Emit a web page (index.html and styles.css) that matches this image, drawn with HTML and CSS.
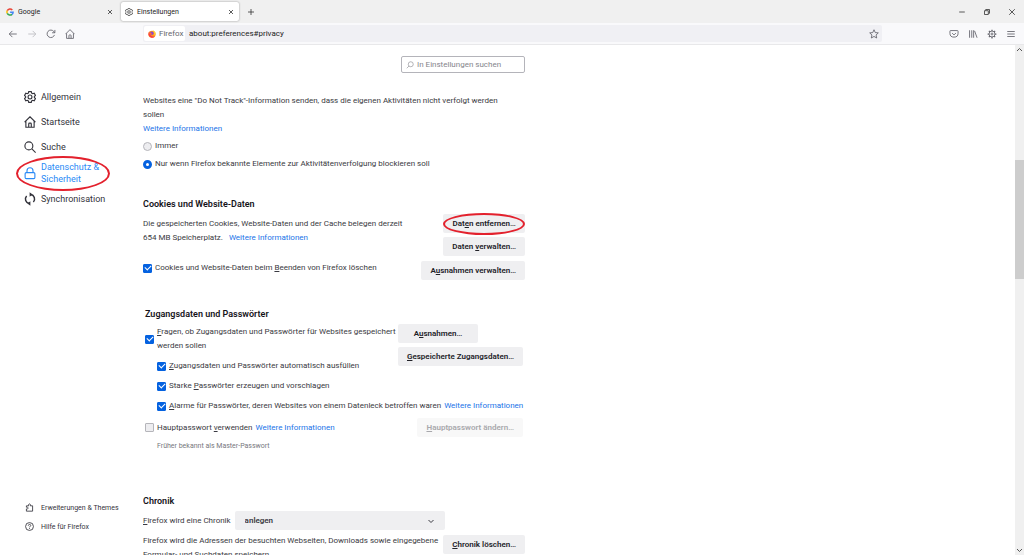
FILE: index.html
```html
<!DOCTYPE html>
<html lang="de">
<head>
<meta charset="utf-8">
<title>Einstellungen</title>
<link rel="stylesheet" href="styles.css">
</head>
<body>
<header class="tabbar">
  <div class="tab">
    <svg class="tab-icon" viewBox="0 0 16 16"><g fill="none" stroke-width="3"><path d="M12.6 3.9A6.2 6.2 0 0 0 2.5 5.3" stroke="#ea4335"/><path d="M2.5 5.3a6.2 6.2 0 0 0 0 5.4" stroke="#fbbc05"/><path d="M2.5 10.7a6.2 6.2 0 0 0 9.6 2" stroke="#34a853"/><path d="M12.1 12.7a6 6 0 0 0 2.1-4.4H8.2" stroke="#4285f4"/></g></svg>
    <span class="tab-title">Google</span>
    <button class="icon-button" aria-label="Google schließen"><svg class="close-icon" viewBox="0 0 8 8"><path d="M2 2l4 4m0-4l-4 4"/></svg></button>
  </div>
  <div class="tab tab-active">
    <svg class="tab-icon line-icon" viewBox="0 0 16 16"><use href="#gear"/></svg>
    <span class="tab-title">Einstellungen</span>
    <button class="icon-button" aria-label="Einstellungen schließen"><svg class="close-icon" viewBox="0 0 8 8"><path d="M2 2l4 4m0-4l-4 4"/></svg></button>
  </div>
  <button class="icon-button new-tab" aria-label="Neuer Tab"><svg class="close-icon" viewBox="0 0 8 8"><path d="M4 1v6M1 4h6"/></svg></button>
  <div class="window-controls">
    <button class="icon-button" aria-label="Minimieren"><svg class="close-icon" viewBox="0 0 8 8"><path d="M1.200 4h5.600"/></svg></button>
    <button class="icon-button" aria-label="Wiederherstellen"><svg class="close-icon" viewBox="0 0 8 8"><path d="M1.500 2.700h3.800v3.800H1.500zM2.700 2.500V1.500h3.800v3.800h-1"/></svg></button>
    <button class="icon-button" aria-label="Fenster schließen"><svg class="close-icon" viewBox="0 0 8 8"><path d="M1.200 1.200l5.600 5.600m0-5.600L1.200 6.800"/></svg></button>
  </div>
</header>
<div class="toolbar">
  <div class="nav-buttons">
    <button class="icon-button" aria-label="Zurück"><svg class="tool-icon" viewBox="0 0 16 16"><path d="M14 8H2M7 3L2 8l5 5"/></svg></button>
    <button class="icon-button faded" aria-label="Vor"><svg class="tool-icon" viewBox="0 0 16 16"><path d="M2 8h12M9 3l5 5-5 5"/></svg></button>
    <button class="icon-button" aria-label="Neu laden"><svg class="tool-icon" viewBox="0 0 16 16"><path d="M13.500 9.500A6 6 0 1 1 12.500 4l1.500 2M14.200 1.500V6H9.700"/></svg></button>
    <button class="icon-button" aria-label="Startseite"><svg class="tool-icon" viewBox="0 0 16 16"><use href="#house"/></svg></button>
  </div>
  <div class="urlbar">
    <span class="identity">
      <svg class="tab-icon" viewBox="0 0 16 16"><circle cx="8" cy="8.500" r="7.200" fill="#ff9a1a"/><path d="M.8 8.500a7.200 7.200 0 0 0 13 4C10 14 5 12 3.500 8 2.500 6 2.500 4 3 2.500 1.500 4 .8 6 .8 8.500z" fill="#fa3a4c"/><path d="M9.500 0C10 3 14 5 12.500 11 16 9 16 5.500 13.500 3 12.500 2 11 1.500 9.500 0z" fill="#ffd43a"/><circle cx="7.500" cy="6.500" r="3.600" fill="#8a45d0"/><path d="M3 6.500c2-1.500 4-1 5 .5-1.800 0-2 1.500-.5 2.500-2 1.500-4.500 0-4.500-3z" fill="#ff6a2a"/></svg>
      Firefox
    </span>
    <input class="url-input" type="text" aria-label="Adresse" value="about:preferences#privacy">
    <button class="icon-button" aria-label="Lesezeichen"><svg class="tool-icon" viewBox="0 0 16 16"><path d="M8 1.200l2 4.500 4.900.5-3.600 3.300 1 4.900L8 11.900l-4.300 2.500 1-4.900L1.100 6.200 6 5.700z"/></svg></button>
  </div>
  <div class="tool-buttons">
    <button class="icon-button" aria-label="Pocket"><svg class="tool-icon" viewBox="0 0 16 16"><path d="M2.500 2.500h11q1 0 1 1V7a6.500 6 0 0 1-13 0V3.500q0-1 1-1zM5 6.500l3 3 3-3"/></svg></button>
    <button class="icon-button" aria-label="Bibliothek"><svg class="tool-icon" viewBox="0 0 16 16"><path d="M2.500 2v12M6 2v12M9 2v12M10.500 3l4 11"/></svg></button>
    <button class="icon-button" aria-label="Einstellungen"><svg class="tool-icon" viewBox="0 0 16 16"><circle cx="8" cy="8" r="4.800"/><circle cx="8" cy="8" r="1.600"/><path d="M8 1v2.500M8 12.500V15M1 8h2.500M12.500 8H15M3 3l2 2M11 11l2 2M3 13l2-2M11 5l2-2" stroke-width="2"/></svg></button>
    <button class="icon-button" aria-label="Menü"><svg class="tool-icon" viewBox="0 0 16 16"><path d="M2 4h12M2 8h12M2 12h12"/></svg></button>
  </div>
</div>
<div class="page">
  <aside class="sidebar">
    <nav class="categories">
      <a class="category" href="#general"><svg class="category-icon" viewBox="0 0 16 16"><use href="#gear"/></svg>Allgemein</a>
      <a class="category" href="#home"><svg class="category-icon" viewBox="0 0 16 16"><use href="#house"/></svg>Startseite</a>
      <a class="category" href="#search"><svg class="category-icon" viewBox="0 0 16 16"><circle cx="6.500" cy="6.500" r="5.300"/><path d="M10.500 10.500l5 5"/></svg>Suche</a>
      <a class="category category-selected" href="#privacy"><svg class="category-icon" viewBox="0 0 16 16"><rect x="1.500" y="7.500" width="13" height="8" rx="1.500"/><path d="M4 7.500V5a4 4 0 0 1 8 0v2.500"/></svg><span>Datenschutz &amp; Sicherheit</span></a>
      <a class="category" href="#sync"><svg class="category-icon" viewBox="0 0 16 16"><path d="M7 14A6 6 0 0 1 3.500 4M9 2a6 6 0 0 1 3.500 10" stroke-width="2"/><path d="M7.500-1v6L11.500 2zM8.500 11v6L4.500 14z" fill="currentColor" stroke="none"/></svg>Synchronisation</a>
    </nav>
    <nav class="footer-links">
      <a class="footer-link" href="#addons"><svg class="footer-icon" viewBox="0 0 16 16"><path d="M2.500 14.500v-4c4 1 4-4 0-3V5h4c-1.500-4.500 4.500-4.500 3 0h4v9.500z"/></svg>Erweiterungen &amp; Themes</a>
      <a class="footer-link" href="#help"><svg class="footer-icon" viewBox="0 0 16 16"><circle cx="8" cy="8" r="7"/><path d="M5.800 6.500c0-3 4.400-3 4.400-.3 0 1.500-2.200 1.500-2.200 3.300M8 11v1.500"/></svg>Hilfe für Firefox</a>
    </nav>
  </aside>
  <main class="content">
    <label class="search"><svg class="search-icon" viewBox="0 0 16 16"><circle cx="9.500" cy="6.500" r="5"/><path d="M6 10l-4.500 4.500"/></svg><input class="search-input" type="search" placeholder="In Einstellungen suchen" aria-label="In Einstellungen suchen"></label>

    <section class="tracking">
      <p class="text">Websites eine "Do Not Track"-Information senden, dass die eigenen Aktivitäten nicht verfolgt werden sollen</p>
      <a class="link" href="#dnt">Weitere Informationen</a>
      <div class="radios">
        <label class="option"><input class="radio" type="radio" name="dnt">Immer</label>
        <label class="option"><input class="radio" type="radio" name="dnt" checked>Nur wenn Firefox bekannte Elemente zur Aktivitätenverfolgung blockieren soll</label>
      </div>
    </section>

    <section class="cookies">
      <h2 class="heading">Cookies und Website-Daten</h2>
      <div class="row">
        <p class="text storage">Die gespeicherten Cookies, Website-Daten und der Cache belegen derzeit 654 MB Speicherplatz. <a class="link spaced" href="#storage">Weitere Informationen</a></p>
        <div class="buttons">
          <button class="button marked">Dat<u>e</u>n entfernen…</button>
          <button class="button">Daten <u>v</u>erwalten…</button>
        </div>
      </div>
      <div class="row row-next">
        <label class="option"><input class="check" type="checkbox" checked><span>Cookies und Website-Daten beim <u>B</u>eenden von Firefox löschen</span></label>
        <button class="button">A<u>u</u>snahmen verwalten…</button>
      </div>
    </section>

    <section class="logins">
      <h2 class="heading">Zugangsdaten und Passwörter</h2>
      <div class="login-grid">
        <label class="option ask"><input class="check" type="checkbox" checked><span><u>F</u>ragen, ob Zugangsdaten und Passwörter für Websites gespeichert werden sollen</span></label>
        <div class="login-buttons">
          <button class="button exceptions">A<u>u</u>snahmen…</button>
          <button class="button stored"><u>G</u>espeicherte Zugangsdaten…</button>
        </div>
        <label class="option sub"><input class="check" type="checkbox" checked><span><u>Z</u>ugangsdaten und Passwörter automatisch ausfüllen</span></label>
        <label class="option sub"><input class="check" type="checkbox" checked><span>Starke <u>P</u>asswörter erzeugen und vorschlagen</span></label>
        <div class="option sub wide"><label class="option"><input class="check" type="checkbox" checked><span><u>A</u>larme für Passwörter, deren Websites von einem Datenleck betroffen waren</span></label><a class="link" href="#breach">Weitere Informationen</a></div>
      </div>
      <div class="row master">
        <div class="option"><label class="option"><input class="check" type="checkbox"><span>Hauptpasswort <u>v</u>erwenden</span></label><a class="link" href="#primary">Weitere Informationen</a></div>
        <button class="button" disabled><u>H</u>auptpasswort ändern…</button>
      </div>
      <p class="hint">Früher bekannt als Master-Passwort</p>
    </section>

    <section class="history">
      <h2 class="heading">Chronik</h2>
      <div class="mode">
        <label for="history-mode"><u>F</u>irefox wird eine Chronik</label>
        <div class="select-box">
          <select class="select" id="history-mode"><option>anlegen</option></select>
          <svg class="chevron" viewBox="0 0 8 8"><path d="M1.500 3l2.500 2.500L6.500 3"/></svg>
        </div>
      </div>
      <div class="row clear">
        <p class="text">Firefox wird die Adressen der besuchten Webseiten, Downloads sowie eingegebene Formular- und Suchdaten speichern.</p>
        <button class="button"><u>C</u>hronik löschen…</button>
      </div>
    </section>
  </main>
  <div class="scrollbar">
    <svg class="scroll-arrow" viewBox="0 0 9 9"><path d="M2 6l2.500-2.500L7 6"/></svg>
    <div class="track-before"></div>
    <div class="thumb"></div>
    <div class="track-after"></div>
    <svg class="scroll-arrow" viewBox="0 0 9 9"><path d="M2 3l2.500 2.500L7 3"/></svg>
  </div>
</div>
<svg class="symbols" aria-hidden="true">
  <symbol id="gear" viewBox="0 0 16 16"><circle cx="8" cy="8" r="2.600"/><path d="M6.300.8h3.400l.5 2 1.400.8 2-.6 1.700 2.900L13.800 7.300v1.400l1.500 1.400-1.700 2.900-2-.6-1.400.8-.5 2H6.300l-.5-2-1.400-.8-2 .6-1.700-2.900 1.500-1.400V7.300L.7 5.900 2.400 3l2 .6 1.400-.8z"/></symbol>
  <symbol id="house" viewBox="0 0 16 16"><path d="M.8 8.200L8 1l7.200 7.200M2.500 7v8h11V7M6.300 15v-4.500q0-1 1-1h1.400q1 0 1 1V15"/></symbol>
</svg>
</body>
</html>
```
FILE: styles.css
```css
*, ::before, ::after { box-sizing: border-box; }
body {
  margin: 0;
  height: 100vh;
  display: flex;
  flex-direction: column;
  overflow: hidden;
  background: #fff;
  color: #3a3a42;
  font: 8px/14px Roboto, "Noto Sans", sans-serif;
}
p, h2 { margin: 0; }
button, input, select { font: inherit; color: inherit; }
svg { fill: none; stroke: currentColor; flex: none; }
u { text-decoration-thickness: 1px; text-underline-offset: 1px; }
.symbols { position: absolute; width: 0; height: 0; }
.icon-button { display: flex; padding: 0; border: 0; background: none; }

.tabbar {
  flex: none;
  display: flex;
  align-items: center;
  height: 23px;
  background: #f0f0f0;
  font-size: 7px;
  color: #222;
}
.tab { display: flex; align-items: center; gap: 4px; width: 120px; height: 19px; padding: 0 6px; }
.tab-active { width: 118px; margin-left: 1px; padding: 0 4px; background: #fff; border-radius: 2px; box-shadow: 0 0 2px #888; }
.tab-title { flex: 1; }
.tab-icon { width: 8px; height: 8px; stroke: none; }
.line-icon { stroke: #333; stroke-width: 1.500; }
.close-icon { width: 8px; height: 8px; stroke: #333; stroke-width: 0.800; }
.new-tab { margin-left: 8px; }
.window-controls { display: flex; gap: 17px; margin-left: auto; padding-right: 8px; }

.toolbar {
  flex: none;
  display: flex;
  align-items: center;
  height: 22px;
  background: #f9f9fb;
  border-bottom: 1px solid #e8e8ea;
}
.nav-buttons { display: flex; gap: 9px; width: 143px; padding-left: 8px; }
.tool-icon { width: 10px; height: 10px; stroke: #66666e; stroke-width: 1.400; }
.faded { opacity: 0.400; }
.urlbar {
  flex: 1;
  display: flex;
  align-items: center;
  height: 17px;
  padding: 1px 3px 1px 1px;
  background: #f0f0f4;
  border-radius: 2px;
}
.identity { display: flex; align-items: center; gap: 3px; width: 41px; height: 15px; padding: 0 4px; background: #fff; border-radius: 2px; color: #66666e; }
.url-input { flex: 1; height: 15px; padding: 0 4px; border: 0; background: none; color: #222; }
.tool-buttons { display: flex; gap: 9px; margin-left: 67px; padding-right: 8px; }

.page { flex: 1; display: flex; min-height: 0; }
.sidebar { flex: none; display: flex; flex-direction: column; width: 143px; padding: 39px 0 19px; }
.categories, .footer-links { display: flex; flex-direction: column; }
.categories { font-size: 9px; }
.category { position: relative; display: flex; align-items: center; gap: 5px; height: 25px; padding: 0 32px 0 24px; color: #33333b; text-decoration: none; line-height: 12px; }
.category-selected { height: 27px; color: #2a8af6; }
.category-icon { width: 12px; height: 12px; stroke-width: 1.500; overflow: visible; }
.category-selected::after, .marked::after {
  content: "";
  position: absolute;
  border: 2px solid #e3212d;
  border-radius: 50%;
}
.category-selected::after { left: 16px; top: -3px; width: 94px; height: 35px; }
.footer-links { margin-top: auto; font-size: 7px; }
.footer-link { display: flex; align-items: center; gap: 7px; height: 19px; padding-left: 25px; color: #33333b; text-decoration: none; }
.footer-icon { width: 9px; height: 9px; stroke-width: 1.500; }

.content { flex: none; width: 382px; padding-top: 11px; overflow: hidden; }
.search { display: flex; align-items: center; gap: 3px; width: 124px; height: 17px; margin-left: auto; padding: 0 4px; border: 1px solid #b4b4ba; border-radius: 2px; color: #85858c; }
.search-icon { width: 8px; height: 8px; stroke-width: 1.200; }
.search-input { flex: 1; min-width: 0; padding: 0; border: 0; outline: 0; background: none; appearance: none; }
.search-input::placeholder { color: #85858c; }
.link { color: #1a73e8; text-decoration: none; }
.text { flex: 1; }
.tracking { margin-top: 21px; }
.tracking .text { padding-right: 16px; }
.tracking .link { display: block; }
.radios { display: flex; flex-direction: column; gap: 4px; margin-top: 3px; }
.option { display: flex; align-items: center; gap: 3px; }
.radio, .check { flex: none; appearance: none; width: 9px; height: 9px; margin: 0; border: 1px solid #b5b5ba; background: #ededf0; }
.radio { border-radius: 50%; }
.radio:checked { border: 3px solid #0562e0; background: #fff; }
.check { display: grid; place-items: center; border-radius: 1px; }
.check:checked { border-color: #0562e0; background: #0562e0; }
.check:checked::before { content: ""; width: 6px; height: 4px; margin-bottom: 2px; border: solid #fff; border-width: 0 0 1px 1px; transform: rotate(-45deg); }
.heading { font-size: 9px; line-height: 14px; font-weight: 600; color: #15141a; }
.row { display: flex; align-items: flex-start; justify-content: space-between; }
.button { position: relative; height: 19px; padding: 0 9px; border: 0; border-radius: 2px; background: #efeff1; color: #222228; font-weight: 600; white-space: nowrap; }
.button:disabled { background: #f8f8f8; color: #a8a8ac; }
.marked::after { left: 0; top: -1px; width: 100%; height: 22px; }

.cookies { margin-top: 26px; }
.cookies .row { margin-top: 3px; }
.cookies .row-next { margin-top: 5px; }
.storage { padding: 3px 36px 0 0; }
.spaced { margin-left: 4px; }
.buttons { display: flex; flex-direction: column; gap: 4px; }

.logins { margin-top: 27px; padding: 0 2px; }
.login-grid { display: grid; grid-template-columns: 253px 1fr; row-gap: 6px; margin-top: 3px; }
.ask { margin-top: 1px; }
.login-buttons { grid-column: 2; grid-row: 1 / 3; display: flex; flex-direction: column; align-items: flex-start; gap: 4px; }
.stored { width: 100%; padding: 0; }
.exceptions { width: 80px; }
.sub { grid-column: 1; padding-left: 12px; }
.wide { grid-column: 1 / 3; white-space: nowrap; }
.master { align-items: center; margin-top: 5px; }
.hint { margin-top: 2px; padding-left: 12px; font-size: 7px; color: #77777d; }

.history { margin-top: 41px; }
.mode { display: flex; align-items: center; gap: 4px; margin-top: 3px; }
.select-box { position: relative; width: 210px; height: 19px; }
.select { appearance: none; width: 100%; height: 100%; padding: 0 10px; border: 0; border-radius: 2px; background: #efeff1; font-weight: 600; }
.chevron { position: absolute; right: 10px; top: 6px; width: 8px; height: 8px; pointer-events: none; }
.clear { gap: 4px; margin-top: 4px; }
.clear .button { margin-top: 1px; }

.scrollbar { display: flex; flex-direction: column; width: 9px; margin-left: auto; background: #f0f0f0; }
.scroll-arrow { width: 9px; height: 9px; color: #555; }
.track-before { flex: 106; }
.thumb { flex: 119; background: #cdcdcd; }
.track-after { flex: 267; }
```
